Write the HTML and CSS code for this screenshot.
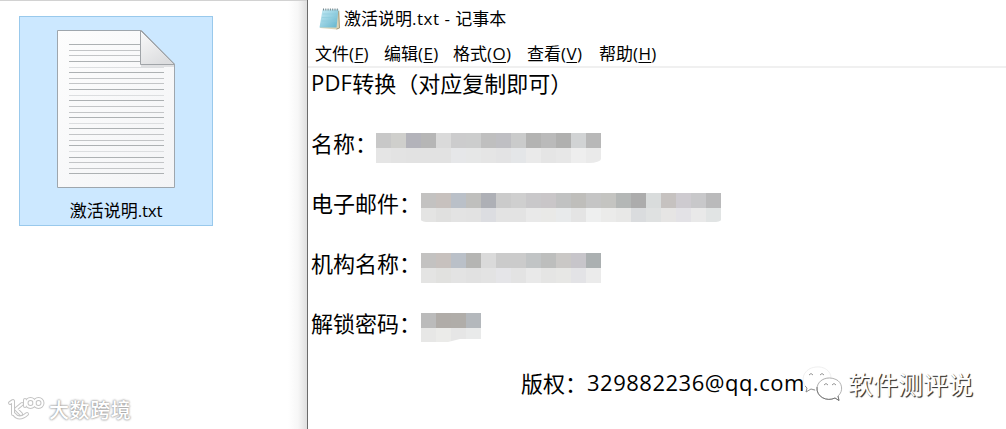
FILE: index.html
```html
<!DOCTYPE html>
<html lang="zh-CN">
<head>
    <meta charset="UTF-8">
    <meta name="viewport" content="width=device-width, initial-scale=1.0">
    <title>激活说明.txt - 记事本</title>
    <link rel="stylesheet" href="styles.css">
</head>
<body>
    <div class="screen">
        <div class="desktop">
            <div class="file">
                <svg class="file-icon" width="120" height="160" viewBox="0 0 120 160">
                    <defs>
                        <linearGradient id="paper" x1="0" y1="0" x2="1" y2="1">
                            <stop offset="0" stop-color="#fdfdfd"/>
                            <stop offset="1" stop-color="#f3f4f6"/>
                        </linearGradient>
                        <linearGradient id="fold" x1="0" y1="0" x2="0.6" y2="1">
                            <stop offset="0" stop-color="#fafafa"/>
                            <stop offset="1" stop-color="#dcdddf"/>
                        </linearGradient>
                    </defs>
                    <path d="M0.5 1.5H84.5L117.500 35V158.500H0.500Z" fill="url(#paper)" stroke="#9ea6ad"/>
                    <g id="paperLines"></g>
                    <path d="M84 36H117V38H84Z" fill="#dfe0e2"/>
                    <path d="M83.500 1.500V35.500H117.500Z" fill="url(#fold)" stroke="#a0a4a8"/>
                </svg>
                <div class="file-name">激活说明<span class="latin">.txt</span></div>
            </div>
        </div>

        <div class="window">
            <div class="title-bar">
                <svg class="notepad-icon" width="24" height="24" viewBox="0 0 24 24">
                    <defs>
                        <linearGradient id="pad" x1="0" y1="0" x2="1" y2="1">
                            <stop offset="0" stop-color="#c9edf6"/>
                            <stop offset="1" stop-color="#62b3cc"/>
                        </linearGradient>
                    </defs>
                    <path d="M5 3.500H21.500V21L19 22.500L2 21Z" fill="#dcd5b8"/>
                    <path d="M20.500 4L21.500 21L18.500 22" fill="none" stroke="#a69b7c"/>
                    <path d="M4.500 2.500H20.500L18.500 20.500H1.500Z" fill="url(#pad)"/>
                    <path d="M4.500 7H19M4 10.500H18.500M3.500 14H18.500" stroke="#8ccbdc" stroke-width=".6"/>
                    <path d="M5 2.500H21" stroke="#77858b" stroke-width="2" stroke-dasharray="1 1.300"/>
                </svg>
                <span class="title">激活说明<span class="latin">.txt - </span>记事本</span>
            </div>
            <div class="menu">
                <span class="item item-f">文件<span class="latin">(<u>F</u>)</span></span>
                <span class="item item-e">编辑<span class="latin">(<u>E</u>)</span></span>
                <span class="item item-o">格式<span class="latin">(<u>O</u>)</span></span>
                <span class="item item-v">查看<span class="latin">(<u>V</u>)</span></span>
                <span class="item item-h">帮助<span class="latin">(<u>H</u>)</span></span>
            </div>
            <div class="text">
                <div class="line"><span class="latin pdf">PDF</span>转换（对应复制即可）</div>
                <div class="line">名称：<div class="mosaic round-right" data-row="name"></div></div>
                <div class="line">电子邮件：<div class="mosaic short round-both" data-row="email"></div></div>
                <div class="line">机构名称：<div class="mosaic" data-row="org"></div></div>
                <div class="line">解锁密码：<div class="mosaic short cut" data-row="password"></div></div>
                <div class="line copyright">版权：<span class="latin mail">329882236@qq.com</span></div>
            </div>
        </div>

        <div class="mark-left">
            <svg width="38" height="24" viewBox="0 0 38 24">
                <g fill="none" stroke-linecap="round" stroke-linejoin="round">
                    <path class="halo" d="M2 6L5 4V17M14 7L8 12L13 17M6 17Q11 24 19 17M17 3V9"/>
                    <circle class="halo" cx="22.500" cy="6" r="4"/>
                    <circle class="halo" cx="30.500" cy="6" r="4"/>
                    <path class="core" d="M2 6L5 4V17M14 7L8 12L13 17M6 17Q11 24 19 17M17 3V9"/>
                    <circle class="core" cx="22.500" cy="6" r="4"/>
                    <circle class="core" cx="30.500" cy="6" r="4"/>
                </g>
            </svg>
            <span>大数跨境</span>
        </div>

        <div class="mark-right">
            <svg width="42" height="38" viewBox="0 0 42 38">
                <path d="M5 23C-3 15 2 3 14 2C22 1 29 6 29 13C21 12 14 17 15 25C12 26 10 25 9 24L4 27Z" fill="#fff" stroke="#e8e8e8" stroke-width=".7"/>
                <path d="M3 21L5 23L4 27L9 24L13 25" fill="none" stroke="#777" stroke-width=".8"/>
                <path d="M27.500 13C20 13 15 18 15 24C15 32 25 37 33 33L37 35.500L36 31C42 26 40 17 34 14.500Q31 13 27.500 13Z" fill="#fff" stroke="#a0a0a0" stroke-width=".8"/>
                <path d="M15 22C14 32 25 37 33 33L37 35.500L36 31" fill="none" stroke="#666" stroke-width=".8"/>
                <path d="M7 10Q9 7 11 10M18 10Q20 7 22 10M22 20Q24 17 26 20M30 20Q32 17 34 20" fill="none" stroke="#888" stroke-width=".9"/>
            </svg>
            <span>软件测评说</span>
        </div>
    </div>

    <script src="script.js"></script>
</body>
</html>
```
FILE: styles.css
```css
/* General Styles */
body {
    margin: 0;
    background: #fff;
    color: #000;
    font-family: "Noto Sans CJK SC", sans-serif;
}

.screen {
    position: relative;
    display: flex;
    width: 1006px;
    height: 429px;
    overflow: hidden;
}

.latin {
    font-family: "Open Sans", "Noto Sans", sans-serif;
    white-space: pre;
}

/* Desktop */
.desktop {
    width: 307px;
    box-sizing: border-box;
    border-top: 1px solid #d2d2d2;
    padding: 15px 0 0 19px;
    background: linear-gradient(to right, #fff 288px, #f7f7f7 298px, #dfdfdf 307px);
}

.file {
    width: 194px;
    height: 210px;
    box-sizing: border-box;
    border: 1px solid #99c9ec;
    background: #cce8ff;
    padding-top: 12px;
    text-align: center;
}

.file-icon {
    display: block;
    margin-left: 37px;
}

.file-name {
    margin-top: 9px;
    font-size: 17px;
    line-height: 24px;
}

.file-name .latin {
    letter-spacing: -0.2px;
}

/* Notepad window */
.window {
    flex: 1;
    border-left: 1px solid #6b6b6b;
    background: #fff;
}

.title-bar {
    display: flex;
    align-items: center;
    height: 38px;
    padding-left: 10px;
    font-size: 17px;
}

.notepad-icon {
    margin-right: 2px;
}

.title {
    line-height: 24px;
    margin-top: -1px;
}

.title .latin {
    letter-spacing: 0.5px;
}

.menu {
    display: flex;
    height: 28px;
    padding: 0 0 0 7px;
    border-bottom: 2px solid #f0f0f0;
    font-size: 17px;
    line-height: 29px;
}

.menu .latin {
    letter-spacing: 0.4px;
}

.item {
    white-space: nowrap;
}

.item u {
    text-underline-offset: 2px;
    text-decoration-thickness: 1px;
}

.item-f {
    width: 69px;
}

.item-e {
    width: 69px;
}

.item-o {
    width: 74px;
}

.item-v {
    width: 72px;
}

.text {
    display: flex;
    flex-direction: column;
    gap: 30px;
    padding: 0 0 0 3px;
    font-size: 22px;
}

.line {
    display: flex;
    height: 30px;
    line-height: 29px;
    white-space: nowrap;
}

.pdf {
    letter-spacing: 0.2px;
}

.mail {
    letter-spacing: 0.5px;
}

.copyright {
    padding-left: 210px;
}

/* Pixelated values */
.mosaic {
    display: grid;
    grid-auto-rows: 15px;
    height: 30px;
    margin-top: 5px;
    overflow: hidden;
}

.short {
    height: 29px;
}

.round-right {
    margin-left: -1px;
    border-bottom-right-radius: 12px 4px;
}

.round-both {
    border-radius: 0 0 8px 8px / 0 0 2px 2px;
}

.cut {
    clip-path: polygon(0 0, 100% 0, 100% 26px, 65% 26px, 45% 29px, 0 29px);
}

/* Watermarks */
.mark-left {
    position: absolute;
    left: 8px;
    top: 393px;
    display: flex;
    color: #fff;
    font-size: 20px;
    font-weight: 500;
    line-height: 33px;
    letter-spacing: 0.6px;
    text-shadow: 0 0 2px #999, 0 0 2px #aaa, 0 0 3px #ccc;
}

.mark-left svg {
    margin: 4px 3px 0 0;
    overflow: visible;
}

.halo {
    stroke: #c4c4c4;
    stroke-width: 4;
}

.core {
    stroke: #fff;
    stroke-width: 2;
}

.mark-right {
    position: absolute;
    left: 802px;
    top: 365px;
    display: flex;
    color: #fff;
    font-size: 25px;
    line-height: 36px;
    text-shadow: 1px 1px 1px #333, 1px 1px 0 #777;
}

.mark-right span {
    margin-left: 4px;
}
```
FILE: script.js
```js
// Cell colors, top and bottom row of each hidden value
const rows = {
    name: [
        "c8c8c8 cfcfcc b3b3ba b6b6b6 dadada cccccd cccdcd bfbfbf bfbfc3 cacbcb b3b3b2 bababa b0b0af d1d3d4 b8b8b8",
        "e5e5e5 e3e3e3 e2e2e2 e2e2e2 e2e2e2 e6e7e9 e6e7e7 e5e5e5 e3e3e4 e4e6e8 eaeaea e5e5e5 e7e7e7 eeeeee eaeaea"
    ],
    email: [
        "c3c2c1 c7c1be bac0c8 bfbfbd aeb0b6 cbcbcb cfcfcf c9c8ca c9c6c8 c1c2c2 bfbebb c5c5c5 c4c4c1 b4b7b6 acacac d9dcdc c6c2c0 cecbd0 c8c8ca bababb",
        "e4e4e3 e0e0df e3e3e3 e2e2e2 dcdde1 e3e3e3 e3e3e3 e9e9e9 e9e9e7 e8eaeb e4e4e4 eeefef ebebea e8e8e7 dadcde dfe1e1 e6e5e4 e3e2e6 e9e9e9 e1e4e4"
    ],
    org: [
        "c3c2c1 c7c1be bac0c8 b5b5b3 dadada cbcbcb cbcbcb c1c4c5 bdbebd cac8c6 c7c5ca abb0b1",
        "e4e4e3 e1e1df e3e3e3 e1e1e1 e3e3e3 e5e5e8 e3e3e3 e9e9e9 e5e5e4 e7e7e5 e3e3e6 ebebeb"
    ],
    password: [
        "bbbbbb b0aca8 b0ada9 b4b8bc",
        "e7e7e6 ebebe9 e6e6e6 e9eaea"
    ]
};

document.querySelectorAll(".mosaic").forEach(function(box) {
    const data = rows[box.dataset.row].map(row => row.split(" "));
    box.style.gridTemplateColumns = "repeat(" + data[0].length + ", 15px)";
    data.flat().forEach(function(color) {
        const cell = document.createElement("span");
        cell.style.background = "#" + color;
        box.appendChild(cell);
    });
});

// Ruled lines on the document icon
const lineShades = ["#adb1b3", "#c3c5c7", "#c3c5c7", "#adb1b3", "#dcdee0"];
const paperLines = document.getElementById("paperLines");
for (let i = 0; i < 24; i++) {
    const line = document.createElementNS("http://www.w3.org/2000/svg", "rect");
    line.setAttribute("x", 12);
    line.setAttribute("y", Math.round(15 + i * 5.63));
    line.setAttribute("width", i < 4 ? 72 : 95);
    line.setAttribute("height", 1);
    line.setAttribute("fill", lineShades[i % 5]);
    paperLines.appendChild(line);
}
```
